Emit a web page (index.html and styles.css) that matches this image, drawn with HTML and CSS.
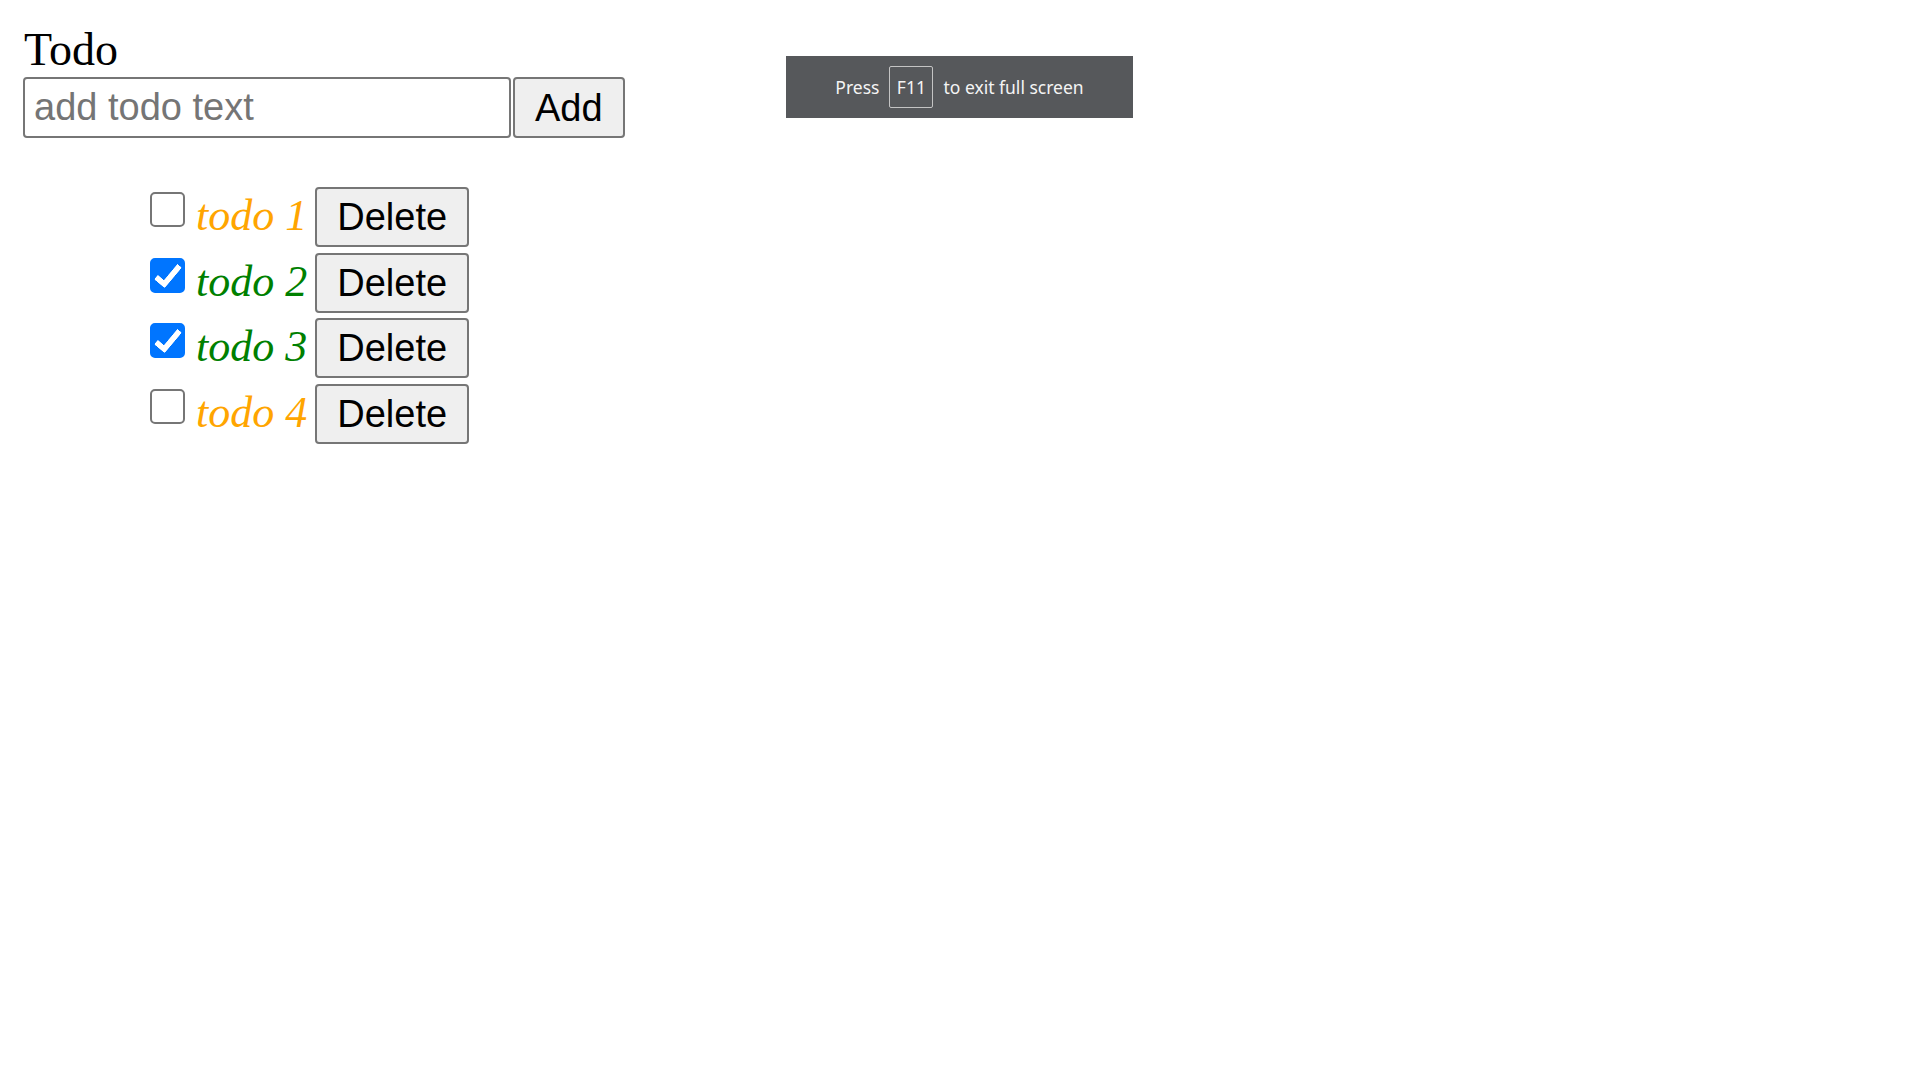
FILE: index.html
```html
<!DOCTYPE html>
<html lang="en">
<head>
    <meta charset="UTF-8">
    <meta name="viewport" content="width=device-width, initial-scale=1.0">
    <title>Todo</title>
    <link rel="stylesheet" href="styles.css">
</head>
<body>

<div class="app">
    <div class="title">Todo</div>

    <form class="add-form">
        <input type="text" class="todo-input" placeholder="add todo text">
        <button type="submit" class="btn">Add</button>
    </form>

    <ul class="todo-list">
        <li><input type="checkbox" class="todo-check"><span class="todo-text">todo 1</span><button class="btn">Delete</button></li>
        <li><input type="checkbox" class="todo-check" checked><span class="todo-text done">todo 2</span><button class="btn">Delete</button></li>
        <li><input type="checkbox" class="todo-check" checked><span class="todo-text done">todo 3</span><button class="btn">Delete</button></li>
        <li><input type="checkbox" class="todo-check"><span class="todo-text">todo 4</span><button class="btn">Delete</button></li>
    </ul>
</div>

<!-- full screen hint -->
<div class="fs-hint">
    <span>Press</span>
    <span class="key">F11</span>
    <span>to exit full screen</span>
</div>

</body>
</html>
```

FILE: styles.css
```css
body {
    margin: 0;
    font-family: "Liberation Serif", "Times New Roman", serif;
    background: #fff;
}
.app {
    padding: 25px 0 0 23px;
}
.title {
    font-size: 46px;
    line-height: 50px;
    margin: 0 0 2px 1px;
}
.add-form {
    display: flex;
    gap: 2px;
    margin: 0;
}
.todo-input {
    width: 488px;
    height: 61px;
    box-sizing: border-box;
    padding: 0 9px;
    border: 2px solid #767676;
    border-radius: 4px;
    font: 38px "Liberation Sans", Arial, sans-serif;
    color: #000;
    outline: none;
}
.todo-input::placeholder {
    color: #757575;
}
.btn {
    height: 60px;
    box-sizing: border-box;
    padding: 7px 20px;
    border: 2px solid #767676;
    border-radius: 4px;
    background-color: #efefef;
    color: #000;
    font: 38px "Liberation Sans", Arial, sans-serif;
    line-height: 42px;
    cursor: pointer;
}
.add-form .btn {
    height: 61px;
}
.todo-list {
    list-style: none;
    margin: 49px 0 0;
    padding: 0 0 0 127px;
}
.todo-list li {
    font-size: 44px;
    margin-bottom: 5.7px;
}
.todo-list .btn {
    margin-left: 8px;
}
.todo-check {
    appearance: none;
    -webkit-appearance: none;
    position: relative;
    width: 35px;
    height: 35px;
    box-sizing: border-box;
    margin: 0 11px 3px 0;
    border: 2px solid #767676;
    border-radius: 5px;
    background: #fff;
    vertical-align: baseline;
}
.todo-check:checked {
    background: #0075ff;
    border-color: #0075ff;
}
.todo-check:checked::after {
    content: "";
    position: absolute;
    left: 9px;
    top: 0;
    width: 8px;
    height: 21px;
    border: solid #fff;
    border-width: 0 6px 6px 0;
    border-radius: 2px;
    transform: rotate(40deg);
}
.todo-text {
    font-style: italic;
    color: orange;
}
.todo-text.done {
    color: green;
}
.fs-hint {
    position: fixed;
    top: 56px;
    left: 786px;
    width: 347px;
    height: 62px;
    display: flex;
    align-items: center;
    justify-content: center;
    gap: 10px;
    background: #56585b;
    color: #f4f4f4;
    font: 17.5px "Noto Sans", "Open Sans", sans-serif;
}
.fs-hint .key {
    width: 42px;
    height: 40px;
    display: flex;
    align-items: center;
    justify-content: center;
    border: 1px solid #c4c4c4;
    border-radius: 2px;
}
```
